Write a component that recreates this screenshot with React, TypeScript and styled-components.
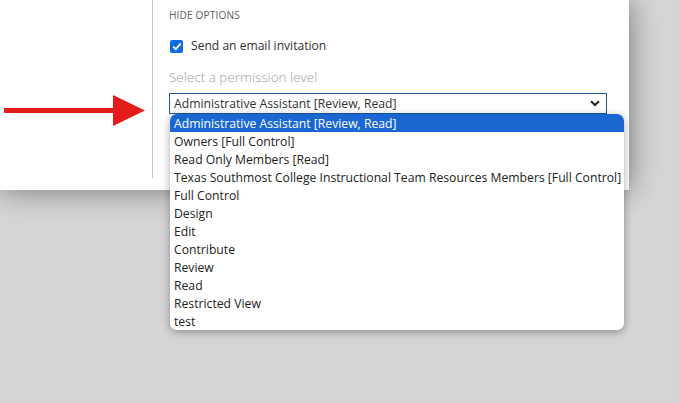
import React from 'react';
import styled, { createGlobalStyle } from 'styled-components';

const GlobalStyle = createGlobalStyle`
    html, body {
        margin: 0;
        padding: 0;
        background: #d5d5d5;
        font-family: "Open Sans", "Noto Sans", sans-serif;
    }
    #root {
        width: 679px;
        height: 403px;
        overflow: hidden;
    }
`;

const Page = styled.div`
    width: 679px;
    height: 403px;
    background: #d5d5d5;
`;

const Panel = styled.div`
    width: 629px;
    height: 190px;
    background: #ffffff;
    display: flex;
    box-shadow: 0 0 28px rgba(0, 0, 0, 0.45);
`;

const Gutter = styled.div`
    width: 152px;
    padding-top: 95px;
    box-sizing: border-box;
`;

const Divider = styled.div`
    width: 1px;
    height: 178px;
    background: #c6c6c6;
`;

const Content = styled.div`
    position: relative;
    padding: 8px 0 0 16px;
    display: flex;
    flex-direction: column;
`;

const SectionLabel = styled.div`
    font-size: 10.2px;
    color: #605e5c;
    letter-spacing: 0.1px;
    line-height: 14px;
`;

const CheckRow = styled.label`
    display: flex;
    align-items: center;
    gap: 8px;
    margin-top: 16px;
    font-size: 12.1px;
    color: #323130;
    line-height: 16px;
`;

const CheckBox = styled.span`
    width: 13px;
    height: 13px;
    margin-left: 1px;
    border-radius: 2px;
    background: #0f6cde;
    display: flex;
    align-items: center;
    justify-content: center;
`;

const FieldLabel = styled.div`
    margin-top: 14px;
    font-size: 13.5px;
    font-weight: 300;
    color: #9f9d9b;
    line-height: 18px;
`;

const SelectBox = styled.div`
    margin-top: 7px;
    width: 438px;
    height: 21px;
    box-sizing: border-box;
    border: 1px solid #1b5a96;
    display: flex;
    align-items: center;
    justify-content: space-between;
    padding: 0 6px 0 4px;
    font-size: 12.2px;
    color: #323130;
`;

const ListBox = styled.ul`
    position: absolute;
    left: 17px;
    top: 114px;
    width: 454px;
    margin: 0;
    padding: 0;
    list-style: none;
    background: #ffffff;
    border-radius: 7px;
    overflow: hidden;
    box-shadow: 0 2px 8px rgba(0, 0, 0, 0.35);
`;

const Option = styled.li<{ $selected?: boolean }>`
    height: 18px;
    line-height: 19px;
    padding-left: 4px;
    font-size: 12.2px;
    white-space: nowrap;
    color: ${p => (p.$selected ? '#ffffff' : '#222222')};
    background: ${p => (p.$selected ? '#1a67d2' : 'transparent')};
`;

const options = [
    'Administrative Assistant [Review, Read]',
    'Owners [Full Control]',
    'Read Only Members [Read]',
    'Texas Southmost College Instructional Team Resources Members [Full Control]',
    'Full Control',
    'Design',
    'Edit',
    'Contribute',
    'Review',
    'Read',
    'Restricted View',
    'test',
];

const Arrow = () => (
    <svg width="146" height="32" viewBox="0 0 146 32">
        <rect x="4" y="13" width="112" height="5" fill="#e31b1b" />
        <polygon points="113,0 145,15.5 113,31" fill="#e31b1b" />
    </svg>
);

const Chevron = () => (
    <svg width="10" height="7" viewBox="0 0 10 7">
        <path d="M1 1.2 L5 5 L9 1.2" stroke="#222" strokeWidth="2" fill="none" />
    </svg>
);

const Check = () => (
    <svg width="10" height="9" viewBox="0 0 10 9">
        <path d="M1.2 4.6 L3.8 7.2 L8.8 1.4" stroke="#fff" strokeWidth="1.8" fill="none" />
    </svg>
);

export default function App() {
    return (
        <Page>
            <GlobalStyle />
            <Panel>
                <Gutter>
                    <Arrow />
                </Gutter>
                <Divider />
                <Content>
                    <SectionLabel>HIDE OPTIONS</SectionLabel>
                    <CheckRow>
                        <CheckBox>
                            <Check />
                        </CheckBox>
                        Send an email invitation
                    </CheckRow>
                    <FieldLabel>Select a permission level</FieldLabel>
                    <SelectBox>
                        <span>{options[0]}</span>
                        <Chevron />
                    </SelectBox>
                    <ListBox>
                        {options.map((o, i) => (
                            <Option key={o} $selected={i === 0}>
                                {o}
                            </Option>
                        ))}
                    </ListBox>
                </Content>
            </Panel>
        </Page>
    );
}
